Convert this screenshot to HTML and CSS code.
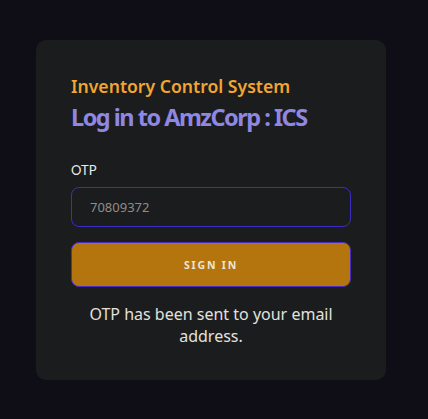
FILE: index.html
```html
<!DOCTYPE html>
<html lang="en">
<head>
<meta charset="utf-8">
<title>Log in</title>
<link rel="stylesheet" href="styles.css">
</head>
<body>
<main class="page">
  <section class="card">
    <p class="eyebrow">Inventory Control System</p>
    <h1 class="title">Log in to AmzCorp : ICS</h1>
    <form class="form">
      <label class="label" for="otp">OTP</label>
      <input class="input" id="otp" type="text" placeholder="70809372">
      <button class="btn" type="button">SIGN IN</button>
    </form>
    <p class="note">OTP has been sent to your email address.</p>
  </section>
</main>
</body>
</html>
```
FILE: styles.css
```css
* { box-sizing: border-box; }
html, body { margin: 0; padding: 0; }
body {
  background: #0f0e17;
  font-family: "Noto Sans", sans-serif;
  width: 428px;
  height: 419px;
}
.page {
  padding: 40px 42px 39px 36px;
}
.card {
  width: 350px;
  height: 340px;
  background: #1b1c1e;
  border-radius: 10px;
  padding: 34px 35px 0 35px;
}
.eyebrow {
  margin: 0;
  color: #f2a530;
  font-size: 17.6px;
  font-weight: 600;
  line-height: 24px;
}
.title {
  margin: 4px 0 0 0;
  color: #9087e2;
  font-size: 23.5px;
  font-weight: 700;
  line-height: 30px;
  letter-spacing: -1.5px;
}
.form {
  display: flex;
  flex-direction: column;
  margin-top: 29px;
}
.label {
  color: #ecebe8;
  font-family: "Lato", sans-serif;
  font-size: 13px;
  line-height: 18px;
  margin-bottom: 8px;
}
.input {
  height: 40px;
  width: 280px;
  background: #1b1c1e;
  border: 1px solid #3d2cc4;
  border-radius: 8px;
  padding: 0 18px;
  font-family: "Noto Sans", sans-serif;
  font-size: 13px;
  color: #ddd;
  outline: none;
}
.input::placeholder { color: #8f8c88; }
.btn {
  margin-top: 15px;
  height: 45px;
  width: 280px;
  background: #b4750f;
  border: 1px solid #4a2fc0;
  border-radius: 8px;
  color: #ece4d6;
  font-family: "Noto Sans", sans-serif;
  font-size: 10.5px;
  font-weight: 700;
  letter-spacing: 1.8px;
  padding: 0;
}
.note {
  margin: 16px 0 0 0;
  color: #e2e1df;
  text-align: center;
  font-size: 16px;
  line-height: 22px;
}
```
